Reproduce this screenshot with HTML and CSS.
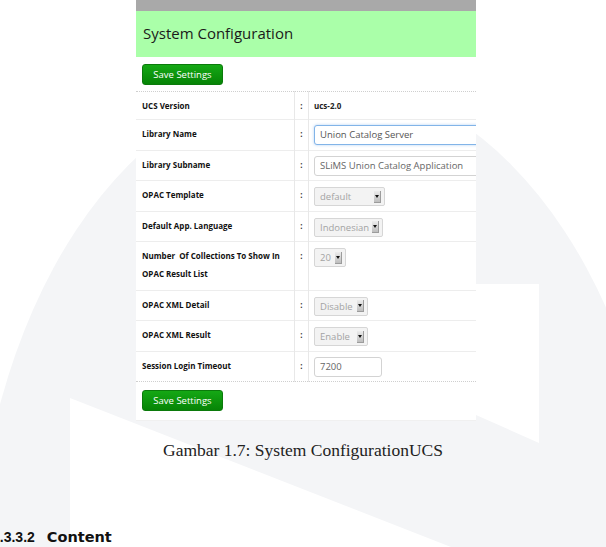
FILE: index.html
```html
<!DOCTYPE html>
<html lang="id">
<head>
  <meta charset="UTF-8">
  <meta name="viewport" content="width=device-width, initial-scale=1.0">
  <title>System Configuration</title>

  <link rel="stylesheet" href="styles.css">
</head>
<body>
  <div class="page">
    <!-- faint logo behind the page -->
    <svg class="watermark" width="606" height="547" viewBox="0 0 606 547">
      <ellipse cx="320" cy="600" rx="345" ry="523" fill="#f4f5f7"/>
      <polygon points="476,284 539,284 539,443 476,415" fill="#fff"/>
      <polygon points="70,398 451,547 70,547" fill="#fff"/>
    </svg>

    <div class="shot">
      <div class="topbar"></div>
      <div class="head">
        <h1>System Configuration</h1>
      </div>
      <div class="actions">
        <button class="btn">Save Settings</button>
      </div>

      <table class="config">
        <tr class="first">
          <td class="label">UCS Version</td>
          <td class="colon">:</td>
          <td class="value"><b class="plain">ucs-2.0</b></td>
        </tr>
        <tr>
          <td class="label">Library Name</td>
          <td class="colon">:</td>
          <td class="value"><div class="field wide focus">Union Catalog Server</div></td>
        </tr>
        <tr>
          <td class="label">Library Subname</td>
          <td class="colon">:</td>
          <td class="value"><div class="field wide">SLiMS Union Catalog Application</div></td>
        </tr>
        <tr>
          <td class="label">OPAC Template</td>
          <td class="colon">:</td>
          <td class="value"><div class="select w-default">default<span class="arrow"></span></div></td>
        </tr>
        <tr>
          <td class="label">Default App. Language</td>
          <td class="colon">:</td>
          <td class="value"><div class="select w-lang">Indonesian<span class="arrow"></span></div></td>
        </tr>
        <tr>
          <td class="label">Number&nbsp; Of Collections To Show In<br>OPAC Result List</td>
          <td class="colon">:</td>
          <td class="value"><div class="select w-num">20<span class="arrow"></span></div></td>
        </tr>
        <tr>
          <td class="label">OPAC XML Detail</td>
          <td class="colon">:</td>
          <td class="value"><div class="select w-xml">Disable<span class="arrow"></span></div></td>
        </tr>
        <tr>
          <td class="label">OPAC XML Result</td>
          <td class="colon">:</td>
          <td class="value"><div class="select w-xml">Enable<span class="arrow"></span></div></td>
        </tr>
        <tr class="last">
          <td class="label">Session Login Timeout</td>
          <td class="colon">:</td>
          <td class="value"><div class="field short">7200</div></td>
        </tr>
      </table>

      <div class="actions bottom">
        <button class="btn">Save Settings</button>
      </div>
    </div>

    <p class="caption">Gambar 1.7: System ConfigurationUCS</p>
    <h4 class="section"><span class="num">1.3.3.2</span><span class="name">Content</span></h4>
  </div>
</body>
</html>
```

FILE: styles.css
```css
body {
  margin: 0;
  background: #fff;
}

.page {
  position: relative;
  width: 606px;
  height: 547px;
  overflow: hidden;
}

.watermark {
  position: absolute;
  top: 0;
  left: 0;
}

.shot {
  position: relative;
  margin-left: 136px;
  width: 340px;
  height: 420px;
  overflow: hidden;
  background: #fff;
  border-bottom: 1px solid #f0f0f0;
  font-family: "Open Sans", "DejaVu Sans", sans-serif;
}

.topbar {
  height: 11px;
  background: #a9a9a9;
}

.head {
  height: 46px;
  background: #aaffa9;
  display: flex;
  align-items: center;
  padding-left: 7px;
}

.head h1 {
  margin: 0 0 3px;
  font-size: 15px;
  font-weight: normal;
  color: #1a1a1a;
}

.actions {
  padding: 7px 6px 6px;
}

.actions.bottom {
  padding-top: 8px;
}

.btn {
  display: block;
  width: 81px;
  height: 21px;
  padding: 0;
  border: 1px solid #0b7a0b;
  border-radius: 3px;
  background: linear-gradient(#15a815, #068406);
  color: #fff;
  font-family: "Open Sans", sans-serif;
  font-size: 9.5px;
}

.config {
  width: 420px;
  border-collapse: collapse;
  border-top: 1px dotted #cfcfcf;
}

.config tr {
  border-bottom: 1px solid #ededed;
}

.config tr.last {
  border-bottom: 1px dotted #cfcfcf;
}

.config td {
  vertical-align: top;
}

.label {
  width: 146px;
  padding: 5px 6px 6.5px;
  line-height: 18px;
  font-size: 8px;
  font-weight: bold;
  color: #111;
}

.config tr.first .label {
  padding-bottom: 4px;
}

.colon {
  width: 11px;
  padding: 5px 1px 0;
  line-height: 18px;
  text-align: center;
  font-size: 8px;
  font-weight: bold;
  color: #333;
  border-left: 1px solid #e8e8e8;
  border-right: 1px solid #e8e8e8;
}

.value {
  padding: 5px 0 0 5px;
}

.plain {
  display: block;
  line-height: 18px;
  font-size: 8px;
  color: #222;
}

.field {
  box-sizing: border-box;
  height: 20px;
  padding-left: 5px;
  border: 1px solid #d3d3d3;
  border-radius: 3px;
  line-height: 18px;
  font-size: 9.5px;
  color: #666;
  background: #fff;
}

.field.wide {
  width: 200px;
}

.field.short {
  width: 68px;
}

.field.focus {
  border-color: #82b4e8;
  box-shadow: 0 0 3px rgba(82, 150, 230, 0.45);
  color: #555;
}

.select {
  box-sizing: border-box;
  display: flex;
  align-items: center;
  justify-content: space-between;
  height: 19px;
  margin-top: 1px;
  padding: 0 3px 0 5px;
  border: 1px solid #d6d6d6;
  border-radius: 2px;
  background: #f3f3f3;
  font-size: 9.5px;
  color: #a3a3a3;
}

.w-default { width: 71px; }
.w-lang { width: 69px; }
.w-num { width: 32px; }
.w-xml { width: 54px; }

.arrow {
  position: relative;
  width: 6px;
  height: 11px;
  border: 1px solid #9c9c9c;
  border-width: 0 1px 1px 0;
  background: linear-gradient(#ededed, #bdbdbd);
}

.arrow::after {
  content: "";
  position: absolute;
  left: 1px;
  top: 4px;
  border-left: 2px solid transparent;
  border-right: 2px solid transparent;
  border-top: 3px solid #111;
}

.caption {
  position: relative;
  margin: 20px 0 0;
  line-height: 18px;
  text-align: center;
  font-family: "Liberation Serif", serif;
  font-size: 17.5px;
  color: #222;
}

.section {
  position: relative;
  margin: 69px 0 0 -8px;
  line-height: 18px;
  font-family: "Liberation Sans", sans-serif;
  font-size: 14px;
  font-weight: bold;
  color: #111;
}

.section .name {
  margin-left: 12px;
  font-family: "DejaVu Sans", sans-serif;
  font-size: 14.5px;
}
```
